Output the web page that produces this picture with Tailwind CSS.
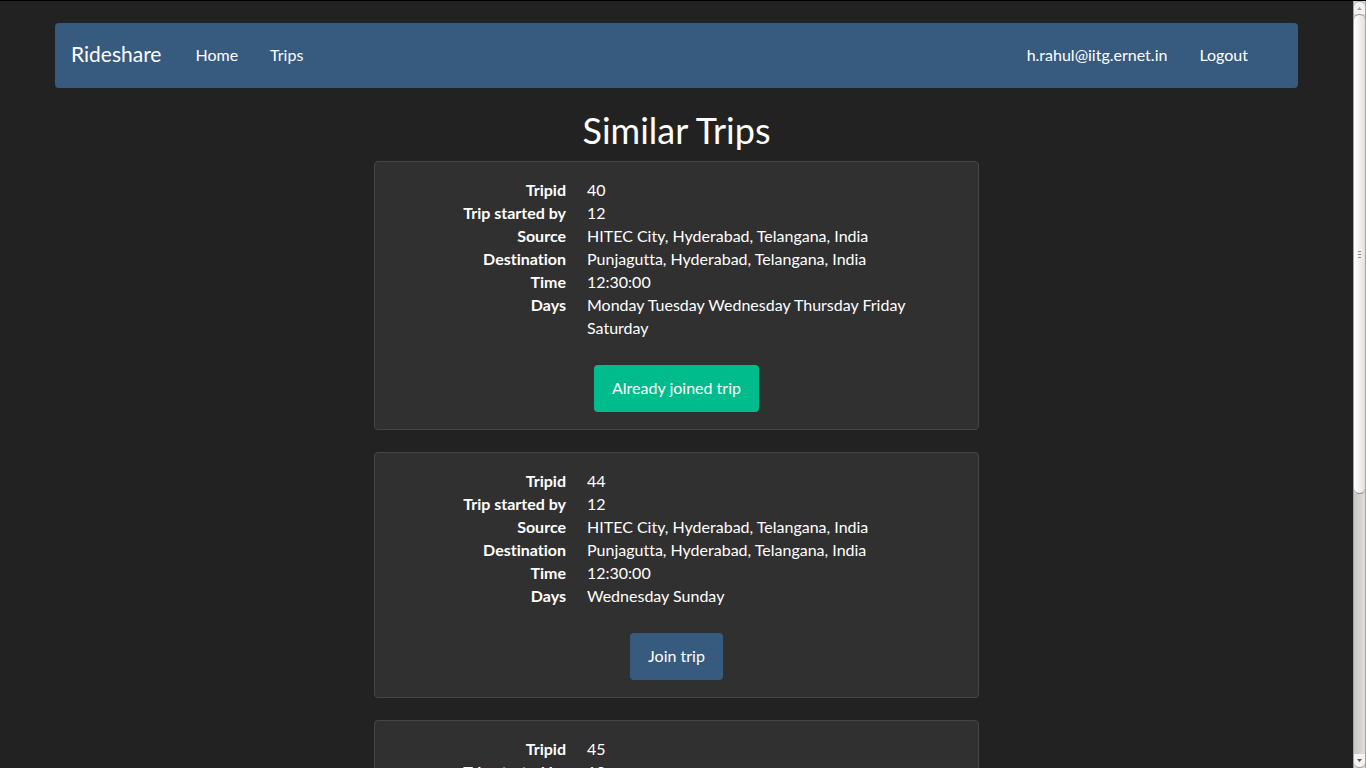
<!DOCTYPE html>
<html lang="en">
<head>
<meta charset="utf-8">
<meta name="viewport" content="width=device-width, initial-scale=1">
<title>Rideshare</title>
<script src="https://cdn.jsdelivr.net/npm/@tailwindcss/browser@4"></script>
</head>
<body class="flex h-screen overflow-hidden border-t border-black bg-[#222222] font-['Lato',sans-serif] text-[16px] leading-[23px] text-white [font-variant-ligatures:none]">
  <div class="min-w-0 flex-1 overflow-hidden px-4 pt-[22px]">
    <div class="mx-auto max-w-[1243px]">
      <nav class="flex h-[65px] items-center rounded bg-[#375a7f] pr-[34px]">
        <a href="#" class="mr-0.5 px-4 pb-1 text-[21px]">Rideshare</a>
        <a href="#" class="px-4 pb-0.5">Home</a>
        <a href="#" class="px-4 pb-0.5">Trips</a>
        <a href="#" class="ml-auto px-4 pb-0.5">h.rahul@iitg.ernet.in</a>
        <a href="#" class="px-4 pb-0.5">Logout</a>
      </nav>
      <main class="mx-auto mt-[21px] max-w-[605px]">
        <h1 class="mb-[9px] text-center text-[36px] leading-[43px]">Similar Trips</h1>
        <section class="mb-[22px] rounded border border-[#464545] bg-[#303030] px-[17px] pt-4 pb-[17px]">
          <dl class="grid grid-cols-[174px_1fr] gap-x-[21px]">
            <dt class="text-right font-bold">Tripid</dt><dd>40</dd>
            <dt class="text-right font-bold">Trip started by</dt><dd>12</dd>
            <dt class="text-right font-bold">Source</dt><dd>HITEC City, Hyderabad, Telangana, India</dd>
            <dt class="text-right font-bold">Destination</dt><dd>Punjagutta, Hyderabad, Telangana, India</dd>
            <dt class="text-right font-bold">Time</dt><dd>12:30:00</dd>
            <dt class="text-right font-bold">Days</dt><dd class="pr-8">Monday Tuesday Wednesday Thursday Friday Saturday</dd>
          </dl>
          <div class="mt-[26px] flex justify-center">
            <button type="button" class="h-[47px] rounded bg-[#00bc8c] px-[18px] pb-0.5">Already joined trip</button>
          </div>
        </section>
        <section class="mb-[22px] rounded border border-[#464545] bg-[#303030] px-[17px] pt-4 pb-[17px]">
          <dl class="grid grid-cols-[174px_1fr] gap-x-[21px]">
            <dt class="text-right font-bold">Tripid</dt><dd>44</dd>
            <dt class="text-right font-bold">Trip started by</dt><dd>12</dd>
            <dt class="text-right font-bold">Source</dt><dd>HITEC City, Hyderabad, Telangana, India</dd>
            <dt class="text-right font-bold">Destination</dt><dd>Punjagutta, Hyderabad, Telangana, India</dd>
            <dt class="text-right font-bold">Time</dt><dd>12:30:00</dd>
            <dt class="text-right font-bold">Days</dt><dd class="pr-8">Wednesday Sunday</dd>
          </dl>
          <div class="mt-[26px] flex justify-center">
            <button type="button" class="h-[47px] rounded bg-[#375a7f] px-[18px] pb-0.5">Join trip</button>
          </div>
        </section>
        <section class="rounded border border-[#464545] bg-[#303030] px-[17px] pt-4 pb-[17px]">
          <dl class="grid grid-cols-[174px_1fr] gap-x-[21px]">
            <dt class="text-right font-bold">Tripid</dt><dd>45</dd>
            <dt class="text-right font-bold">Trip started by</dt><dd>12</dd>
          </dl>
        </section>
      </main>
    </div>
  </div>
  <!-- Scrollbar -->
  <div class="flex w-[13px] shrink-0 flex-col border-x border-[#a5a29f] bg-[#d9d7d5]" aria-hidden="true">
    <div class="flex h-[13px] items-center justify-center rounded-t-full border-t border-[#a5a29f] bg-[#f4f3f2]">
      <svg class="h-[3px] w-[5px]" viewBox="0 0 5 3"><path d="M0 3 2.500 0 5 3Z" fill="#a5a29f"/></svg>
    </div>
    <div class="flex flex-[480] flex-col items-center justify-center gap-[2px] rounded-full border-y border-[#8f8c89] bg-linear-to-r from-white to-[#e4e2e0]">
      <span class="h-px w-[3px] bg-[#8f8c89]"></span>
      <span class="h-px w-[3px] bg-[#8f8c89]"></span>
      <span class="h-px w-[3px] bg-[#8f8c89]"></span>
    </div>
    <div class="flex-[261] bg-linear-to-r from-[#c9c7c4] to-[#e0dedc]"></div>
    <div class="flex h-[14px] items-center justify-center rounded-b-full border-b border-[#a5a29f] bg-[#f4f3f2]">
      <svg class="h-[3px] w-[5px]" viewBox="0 0 5 3"><path d="M0 0 2.500 3 5 0Z" fill="#5c5a58"/></svg>
    </div>
  </div>
</body>
</html>
